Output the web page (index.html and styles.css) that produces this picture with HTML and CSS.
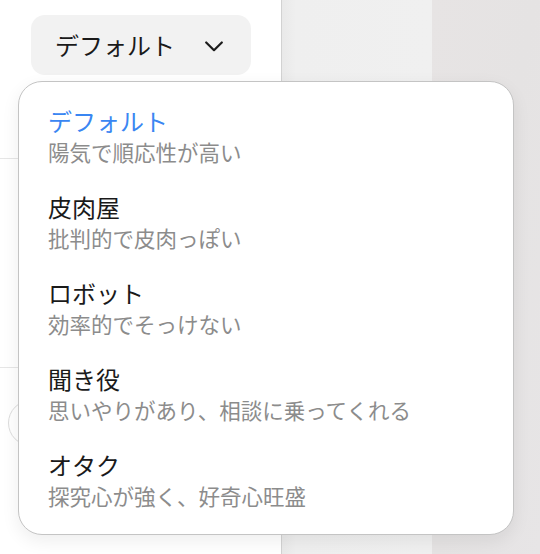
FILE: index.html
```html
<!DOCTYPE html>
<html lang="ja">
<head>
<meta charset="utf-8">
<title>Persona</title>
<link rel="stylesheet" href="styles.css">
</head>
<body>
<div class="app">
  <aside class="sidebar">
    <button class="persona-btn" type="button">
      <span class="persona-label">デフォルト</span>
      <svg class="chevron" width="18" height="11" viewBox="0 0 18 11"><polyline points="1.2,1.5 9,9.2 16.8,1.5" fill="none" stroke="#1c1c1c" stroke-width="2.2" stroke-linecap="round" stroke-linejoin="round"/></svg>
    </button>
    <div class="section section-a"></div>
    <div class="section section-b"></div>
    <div class="circle-row"><span class="circle"></span></div>
  </aside>
  <main class="main"></main>
  <div class="side"></div>

  <div class="menu">
    <div class="item">
      <div class="title active">デフォルト</div>
      <div class="sub">陽気で順応性が高い</div>
    </div>
    <div class="item">
      <div class="title">皮肉屋</div>
      <div class="sub">批判的で皮肉っぽい</div>
    </div>
    <div class="item">
      <div class="title">ロボット</div>
      <div class="sub">効率的でそっけない</div>
    </div>
    <div class="item">
      <div class="title">聞き役</div>
      <div class="sub">思いやりがあり、相談に乗ってくれる</div>
    </div>
    <div class="item">
      <div class="title">オタク</div>
      <div class="sub">探究心が強く、好奇心旺盛</div>
    </div>
  </div>
</div>
</body>
</html>
```

FILE: styles.css
```css
* { box-sizing: border-box; }
html, body {
  margin: 0;
  padding: 0;
  width: 540px;
  height: 554px;
  overflow: hidden;
  font-family: "Noto Sans CJK JP", "Noto Sans", sans-serif;
}
.app {
  position: relative;
  display: flex;
  width: 540px;
  height: 554px;
}
.sidebar {
  width: 282px;
  flex: none;
  background: #ffffff;
  border-right: 1px solid #d2d2d2;
  padding-top: 15px;
  display: flex;
  flex-direction: column;
  align-items: flex-start;
}
.persona-btn {
  margin-left: 31px;
  height: 60px;
  display: inline-flex;
  align-items: center;
  gap: 30px;
  padding: 0 28px 0 24px;
  border: none;
  border-radius: 14px;
  background: #f2f2f2;
  font-family: inherit;
  font-size: 24px;
  line-height: 32px;
  color: #1a1a1a;
}
.chevron { display: block; margin-top: 2px; }
.section { width: 100%; border-bottom: 1px solid #e6e6e6; }
.section-a { height: 84px; }
.section-b { height: 209px; }
.circle-row { padding: 32px 0 0 8px; }
.circle {
  display: block;
  width: 46px;
  height: 46px;
  border-radius: 50%;
  border: 1px solid #dcdcdc;
}
.main {
  width: 150px;
  flex: none;
  background: linear-gradient(to right, #e9e9e9 0, #efefef 14px, #f0f0f0 100%);
}
.side {
  flex: 1;
  background: linear-gradient(100deg, #e7e4e4 0%, #e5e3e3 50%, #e7e5e6 100%);
}
.menu {
  position: absolute;
  left: 18px;
  top: 81px;
  width: 496px;
  height: 454px;
  background: #ffffff;
  border: 1px solid #c4c4c4;
  border-radius: 24px;
  box-shadow: 0 6px 18px rgba(0, 0, 0, 0.07);
  padding: 11px 0 10px 29px;
}
.item {
  padding: 12px 0;
}
.title {
  font-size: 24px;
  line-height: 32px;
  color: #1a1a1a;
}
.title.active { color: #3a86f2; }
.sub {
  font-size: 21.5px;
  line-height: 30px;
  color: #8c8c8c;
}
```
